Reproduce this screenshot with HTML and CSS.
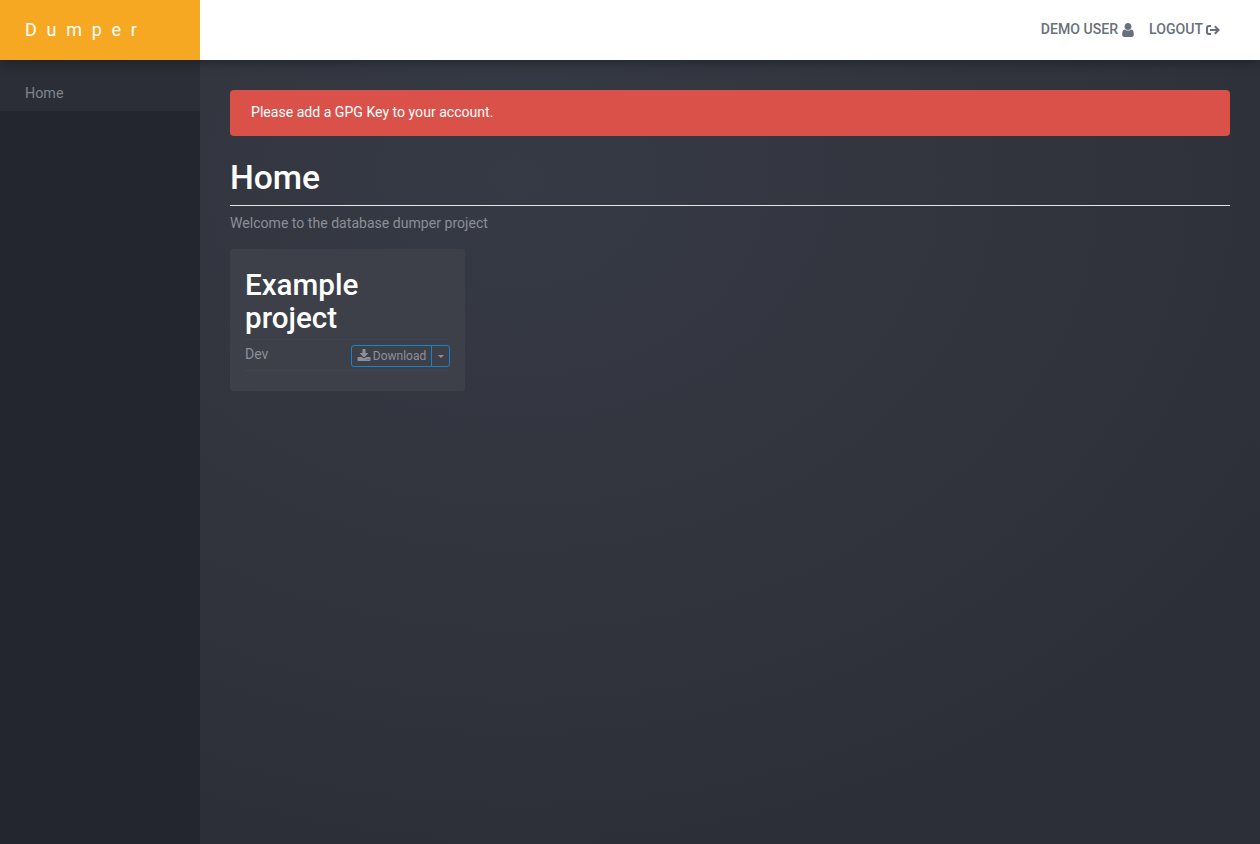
FILE: index.html
```html
<!DOCTYPE html>
<html lang="en">
<head>
<meta charset="utf-8">
<title>Dumper</title>
<link rel="stylesheet" href="styles.css">
</head>
<body>
<header class="topbar">
  <a class="brand" href="#">Dumper</a>
  <nav class="usernav">
    <a class="navlink" href="#">DEMO USER
      <svg class="icon-user" viewBox="256 128 1280 1536"><path d="M1536 1399q0 109-62.5 187t-150.5 78h-854q-88 0-150.5-78t-62.5-187q0-85 8.5-160.5t31.5-152 58.5-131 94-89 134.5-34.5q131 128 313 128t313-128q76 0 134.5 34.5t94 89 58.5 131 31.5 152 8.5 160.5zm-256-887q0 159-112.5 271.5t-271.5 112.5-271.5-112.5-112.5-271.5 112.5-271.5 271.5-112.5 271.5 112.5 112.5 271.5z"/></svg>
    </a>
    <a class="navlink navlink-tight" href="#">LOGOUT
      <svg class="icon-logout" viewBox="0 0 14 10"><path d="M5 1H3A2 2 0 0 0 1 3v4A2 2 0 0 0 3 9h2"/><path d="M4 5h8.500M8.800 1.200 12.600 5 8.800 8.800"/></svg>
    </a>
  </nav>
</header>
<div class="shell">
  <aside class="sidebar">
    <a class="sidelink" href="#">Home</a>
  </aside>
  <main class="content">
    <div class="alert">Please add a GPG Key to your account.</div>
    <h1 class="title">Home</h1>
    <p class="lead">Welcome to the database dumper project</p>
    <section class="card">
      <h2 class="card-title">Example project</h2>
      <div class="env-row">
        <span class="env-name">Dev</span>
        <div class="btn-group">
          <button class="btn btn-main" type="button">
            <svg class="btn-icon" viewBox="0 0 1792 1792"><path d="M1344 1344q0-26-19-45t-45-19-45 19-19 45 19 45 45 19 45-19 19-45zm256 0q0-26-19-45t-45-19-45 19-19 45 19 45 45 19 45-19 19-45zm128-224v320q0 40-28 68t-68 28h-1472q-40 0-68-28t-28-68v-320q0-40 28-68t68-28h465l135 136q58 56 136 56t136-56l136-136h464q40 0 68 28t28 68zm-325-569q17 41-14 70l-448 448q-18 19-45 19t-45-19l-448-448q-31-29-14-70 17-39 59-39h256v-448q0-26 19-45t45-19h256q26 0 45 19t19 45v448h256q42 0 59 39z"/></svg>
            Download
          </button>
          <button class="btn btn-caret" type="button" aria-label="More"><span class="caret"></span></button>
        </div>
      </div>
    </section>
  </main>
</div>
</body>
</html>
```
FILE: styles.css
```css
* { box-sizing: border-box; }
html, body { height: 100%; }
body {
  margin: 0;
  font-family: Roboto, "Liberation Sans", sans-serif;
  font-size: 14.08px;
  line-height: 1.5;
  background: #2e3139;
  overflow: hidden;
}
a { text-decoration: none; }

.topbar {
  position: relative;
  z-index: 2;
  height: 60px;
  display: flex;
  justify-content: space-between;
  background: #fff;
  box-shadow: 0 2px 12px rgba(0, 0, 0, .35);
}
.brand {
  width: 200px;
  padding-left: 25px;
  background: #f7a823;
  color: #fff;
  font-size: 18px;
  font-weight: 400;
  letter-spacing: .54em;
  line-height: 60px;
}
.usernav {
  display: flex;
  gap: 15px;
  padding: 19px 40px 0 0;
}
.navlink {
  display: flex;
  gap: 4px;
  height: 21px;
  align-items: center;
  color: #68707b;
  font-weight: 500;
  font-size: 14.08px;
}
.navlink-tight { gap: 3px; }
.icon-user { width: 12px; height: 14px; fill: currentColor; }
.icon-logout {
  width: 14px;
  height: 10px;
  fill: none;
  stroke: currentColor;
  stroke-width: 2;
}

.shell {
  display: flex;
  height: 784px;
}
.sidebar {
  width: 200px;
  flex: none;
  background: #23262e;
}
.sidelink {
  display: block;
  height: 51px;
  padding: 23px 25px 0;
  background: #2b2e36;
  color: #7d8590;
  font-size: 14.3px;
  line-height: 21px;
}
.content {
  flex: 1;
  padding: 30px;
  background: radial-gradient(ellipse 900px 700px at 30% 15%, #363a44 0%, #31343d 60%, #2c2f37 100%);
}
.alert {
  height: 46px;
  padding: 12px 21px;
  border-radius: 4px;
  background: #da5149;
  color: #fff;
  line-height: 21px;
}
.title {
  margin: 23px 0 0;
  padding-bottom: 8px;
  border-bottom: 1px solid #e4e5e7;
  color: #fff;
  font-size: 33.6px;
  font-weight: 500;
  line-height: 38px;
}
.lead {
  margin: 7px 0 0;
  color: #8a8f98;
  line-height: 21px;
}
.card {
  width: 235px;
  height: 142px;
  margin-top: 15px;
  padding: 20px 15px 0;
  border-radius: 3px;
  background: #3d4049;
}
.card-title {
  margin: 0;
  padding: 0 30px 4px 0;
  border-bottom: 1px solid #404350;
  color: #fff;
  font-size: 29.6px;
  font-weight: 500;
  line-height: 33px;
}
.env-row {
  display: flex;
  justify-content: space-between;
  height: 31px;
  padding-top: 5px;
  border-bottom: 1px solid #414454;
}
.env-name {
  color: #8a8f98;
  line-height: 19px;
}
.btn-group { display: flex; height: 22px; }
.btn {
  height: 22px;
  padding: 0;
  background: transparent;
  border: 1px solid #1585d0;
  color: #8c9199;
  font-family: inherit;
  font-size: 12px;
  line-height: 1;
  display: flex;
  align-items: center;
  justify-content: center;
}
.btn-main {
  width: 81px;
  gap: 2px;
  border-radius: 3px 0 0 3px;
}
.btn-caret {
  width: 19px;
  margin-left: -1px;
  border-radius: 0 3px 3px 0;
}
.btn-icon { width: 14px; height: 14px; fill: currentColor; }
.caret {
  width: 0;
  height: 0;
  border-left: 3.5px solid transparent;
  border-right: 3.5px solid transparent;
  border-top: 3.5px solid currentColor;
}
```
